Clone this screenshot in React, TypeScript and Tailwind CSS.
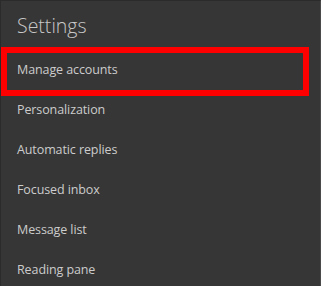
import React from "react";

const items = [
  "Manage accounts",
  "Personalization",
  "Automatic replies",
  "Focused inbox",
  "Message list",
  "Reading pane",
];

const App: React.FC = () => {
  return (
    <div
      className="relative w-[321px] h-[286px] overflow-hidden bg-[#363636] border-t border-l border-[#2b2b2b] border-r-[#4a4a4a] border-r"
      style={{ fontFamily: '"Open Sans", "Noto Sans", sans-serif' }}>
      <div className="h-[49px] flex items-center pl-[16px]">
        <h1 className="text-[19.5px] leading-none font-light text-[#c8c8c8]">Settings</h1>
      </div>

      <ul className="flex flex-col">
        {items.map((label) => (
          <li
            key={label}
            className="h-[40px] flex items-center pl-[16px] text-[12.5px] tracking-[-0.1px] text-[#cccccc]">
            {label}
          </li>
        ))}
      </ul>

      {/* highlight annotation */}
      <div className="absolute left-0 top-[46px] w-[308px] h-[49px] border-[6px] border-[#ff0000] pointer-events-none" />
    </div>
  );
};

export default App;
